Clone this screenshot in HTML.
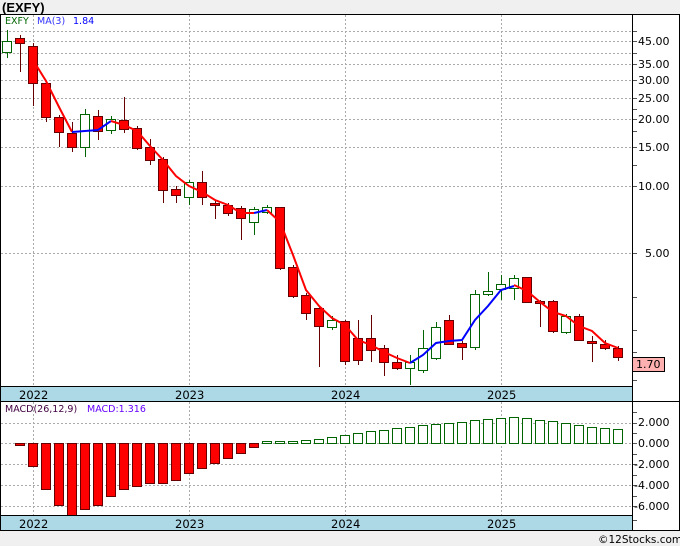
<!DOCTYPE html>
<html><head><meta charset="utf-8"><style>
body{margin:0;background:#f0f0f0;width:680px;height:546px;overflow:hidden;font-family:"Liberation Sans",sans-serif}
svg{display:block}
</style></head><body>
<svg id="s" width="680" height="546" xmlns="http://www.w3.org/2000/svg" font-family="DejaVu Sans, sans-serif">
<rect x="0" y="0" width="680" height="546" fill="#f0f0f0"/>
<text x="2" y="12" font-size="13" font-weight="bold" fill="#000" font-family="Liberation Sans, sans-serif">(EXFY)</text>
<rect x="0.5" y="14.5" width="679" height="516" fill="#fff" stroke="#000"/>
<rect x="1" y="387" width="631" height="14" fill="#add8e6"/>
<rect x="1" y="516" width="631" height="14" fill="#add8e6"/>
<g id="g"></g>
<line x1="0" y1="386.5" x2="632" y2="386.5" stroke="#000"/>
<line x1="0" y1="401.5" x2="680" y2="401.5" stroke="#000"/>
<line x1="0" y1="515.5" x2="632" y2="515.5" stroke="#000"/>
<line x1="632.5" y1="14" x2="632.5" y2="531" stroke="#000"/>
<text x="5" y="24" font-size="9.5" fill="#006400">EXFY</text>
<text x="37" y="24" font-size="9.5" fill="#3333ff">MA(3)</text>
<text x="73" y="24" font-size="9.5" fill="#0000ff">1.84</text>
<text x="5" y="412" font-size="9.5" fill="#400040">MACD(26,12,9)</text>
<text x="87" y="412" font-size="9.5" fill="#6600ff">MACD:1.316</text>
<g font-size="11.5" fill="#000">
<text x="19" y="399">2022</text><text x="175" y="399">2023</text><text x="331" y="399">2024</text><text x="487" y="399">2025</text>
<text x="19" y="528">2022</text><text x="175" y="528">2023</text><text x="331" y="528">2024</text><text x="487" y="528">2025</text>
</g>
<g font-size="11" fill="#000">
<text x="638" y="45">45.00</text><text x="638" y="68">35.00</text><text x="638" y="84">30.00</text><text x="638" y="102">25.00</text><text x="638" y="123">20.00</text><text x="638" y="151">15.00</text><text x="638" y="190">10.00</text><text x="645" y="257">5.00</text>
<text x="638" y="447">0.000</text><text x="638" y="426">2.000</text><text x="634" y="468">-2.000</text><text x="634" y="489">-4.000</text><text x="634" y="510">-6.000</text>
</g>
<rect x="632.5" y="357.5" width="32" height="14" fill="#ffb0b0" stroke="#000"/>
<text x="636" y="368" font-size="11">1.70</text>
<text x="598" y="543" font-size="10.5" fill="#000">©12Stocks.com</text>
</svg>
<script>
var g=document.getElementById('g'),h='';
function L(a,b,c,d,col,w,dash){h+='<line x1="'+a+'" y1="'+b+'" x2="'+c+'" y2="'+d+'" stroke="'+col+'" stroke-width="'+(w||1)+'"'+(dash?' stroke-dasharray="2,2"':'')+'/>';}
[33,189,345,501].forEach(function(x){L(x+.5,15,x+.5,386,'#aaa',1,1);L(x+.5,402,x+.5,515,'#aaa',1,1);});
[31,41,53,64,80,98,119,147,186,253].forEach(function(y){L(1,y+.5,632,y+.5,'#aaa',1,1);});
[423,443,464,485,506].forEach(function(y){L(1,y+.5,632,y+.5,'#aaa',1,1);});
[31,41,53,64,80,98,109,119,131,147,165,186,253,297,330,352,370,380].forEach(function(y){L(632,y+.5,637,y+.5,'#555');});
[412,423,433,443,454,464,475,485,496,506,520].forEach(function(y){L(632,y+.5,637,y+.5,'#555');});
var c=[['g',41,52,30,58],['r',38,43,35,72],['r',46,83,43,106],['r',83,117,83,122],['r',117,132,115,147],['r',133,147,122,152],['g',114,147,109,157],['r',116,131,110,140],['g',119,130,116,134],['r',120,129,97,133],['r',128,148,126,150],['r',147,160,139,165],['r',159,190,157,203],['r',189,195,186,203],['g',182,197,180,205],['r',182,197,171,205],['r',203,205,200,219],['r',205,213,203,216],['r',208,218,206,240],['g',209,222,207,235],['g',207,212,205,214],['r',207,268,207,270],['r',267,296,265,298],['r',295,313,293,320],['r',308,326,306,367],['g',320,327,316,330],['r',321,361,320,365],['r',338,360,320,365],['r',338,350,315,362],['r',348,362,345,376],['r',362,368,355,370],['g',362,368,355,385],['g',348,370,330,373],['g',327,358,322,360],['r',320,344,315,345],['r',343,347,341,360],['g',294,347,290,350],['g',291,294,272,296],['g',284,289,275,300],['g',278,288,275,300],['r',277,302,277,302],['r',301,303,300,327],['r',301,331,300,333],['g',316,332,314,334],['r',316,340,314,340],['r',341,343,336,362],['r',344,348,340,350],['r',348,357,346,361]];
c.forEach(function(k,i){var x=7+13*i,col=k[0]=='r'?'#660000':'#006400';L(x+.5,k[3],x+.5,k[4],col);
var t=Math.min(k[1],k[2]),b=Math.max(k[1],k[2]);if(b-t<2)b=t+2;
h+='<rect x="'+(x-4.5)+'" y="'+(t+.5)+'" width="9" height="'+(b-t)+'" fill="'+(k[0]=='r'?'#ff0000':'#fff')+'" stroke="'+col+'"/>';});
function P(pts,col){h+='<polyline points="'+pts+'" fill="none" stroke="'+col+'" stroke-width="2"/>';}
P('33,60 46,81 59,107 72,132','#ff0000');P('72,132 85,131 98,130 111,121','#0000ff');
P('111,121 124,125 137,131 150,146 163,160 176,176 189,186 202,192 215,200 228,205 241,213 254,213','#ff0000');
P('254,213 267,210','#0000ff');
P('267,210 280,222 293,255 306,290 319,306 332,318 345,325 358,340 371,345 384,352 397,358 410,363','#ff0000');
P('410,363 423,355 436,343 449,341 462,340 475,320 488,306 501,290 514,286','#0000ff');
P('514,285 527,291 540,302 553,312 566,316 579,326 592,331 605,343 618,348','#ff0000');
var m=[445,466,489,505,515,509,505,496,489,486,483,483,480,473,468,463,458,453,447,441,441,441,440,439,437,435,433,431,430,428,427,425,424,423,422,420,419,418,417,418,420,421,423,425,427,428,429];
m.forEach(function(y,i){var x=20+13*i;if(y>443)h+='<rect x="'+(x-4.5)+'" y="443.5" width="9" height="'+(y-443)+'" fill="#ff0000" stroke="#660000"/>';
else h+='<rect x="'+(x-4.5)+'" y="'+(y+.5)+'" width="9" height="'+(443-y)+'" fill="#fff" stroke="#006400"/>';});
g.innerHTML=h;
</script>
</body></html>
